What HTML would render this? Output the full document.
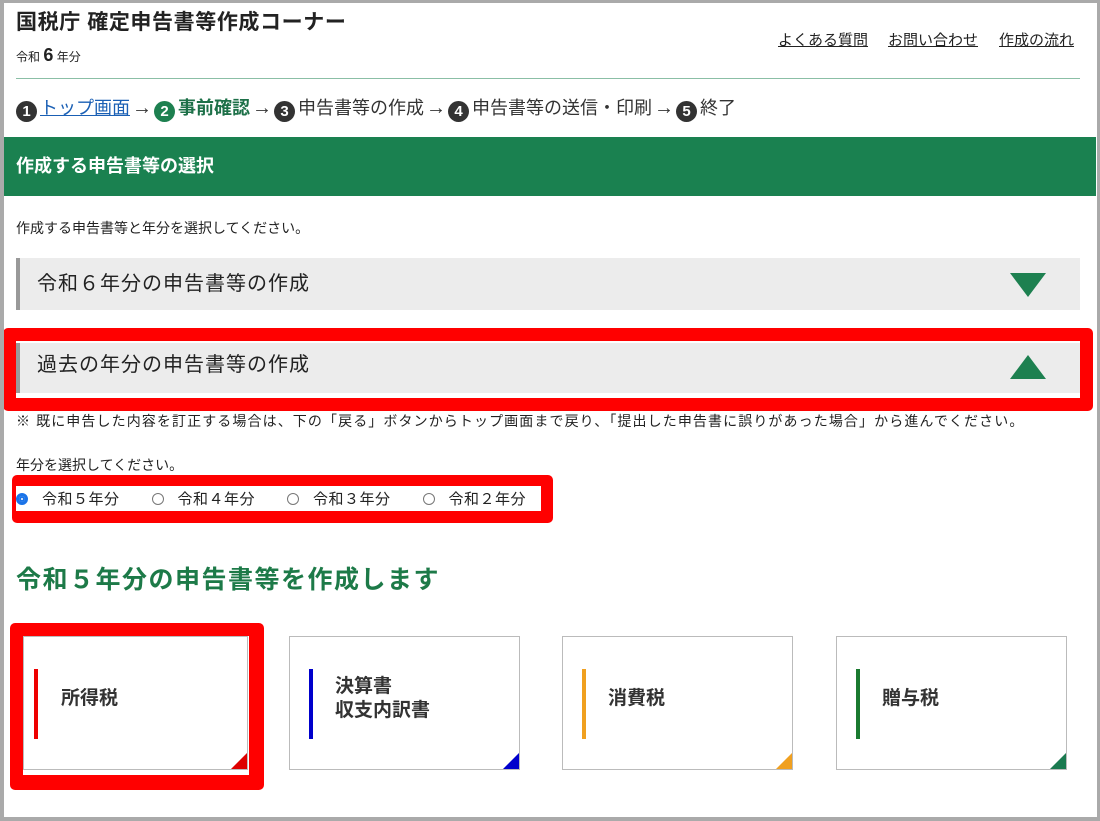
<!DOCTYPE html>
<html><head><meta charset="utf-8"><style>
*{margin:0;padding:0;box-sizing:border-box}
body{width:1100px;height:821px;overflow:hidden;background:#fff;font-family:"Liberation Sans","Noto Sans CJK JP",sans-serif;color:#222;position:relative}
.frame{position:absolute;left:0;top:0;width:1100px;height:821px;border:3px solid #aaa;border-left-width:4px;border-bottom-width:4px}
.a{position:absolute;white-space:nowrap}
.num{display:inline-block;width:21px;height:21px;border-radius:50%;background:#333;color:#fff;font-size:15px;font-weight:bold;text-align:center;line-height:21px;vertical-align:-2px;margin-right:3px}
.acc{position:absolute;left:16px;width:1064px;background:#ececec;border-left:4px solid #999;font-size:20px;padding-left:17px;letter-spacing:1px}
.red{position:absolute;border:13px solid #f00;border-radius:5px}
.card{position:absolute;top:636px;width:231px;height:134px;border:1px solid #bbb;background:#fff}
.card .bar{position:absolute;left:19px;top:32px;width:4px;height:70px}
.card .t{position:absolute;left:45px;font-size:19px;font-weight:bold;line-height:24px;color:#333}
.card .c{position:absolute;right:0;bottom:0;width:0;height:0;border-left:16px solid transparent;border-bottom:16px solid}
.rad{display:inline-block;width:12px;height:12px;border-radius:50%;border:1px solid #777;vertical-align:-1px;margin-right:14px}
.arr{font-size:20px;font-weight:bold;margin:0 2px}
</style></head><body>
<div class="a" style="left:16px;top:6px;font-size:21px;font-weight:bold;letter-spacing:0.6px">国税庁 確定申告書等作成コーナー</div>
<div class="a" style="left:16px;top:45px;font-size:12px">令和 <b style="font-size:18px">6</b> 年分</div>
<div class="a" style="left:778px;top:29px;font-size:15px;text-decoration:underline">よくある質問</div>
<div class="a" style="left:888px;top:29px;font-size:15px;text-decoration:underline">お問い合わせ</div>
<div class="a" style="left:999px;top:29px;font-size:15px;text-decoration:underline">作成の流れ</div>
<div class="a" style="left:16px;top:78px;width:1064px;height:1px;background:#8bbfa6"></div>
<div class="a" style="left:16px;top:94px;font-size:18px;color:#333"><span class="num">1</span><span style="color:#1a5fb4;text-decoration:underline">トップ画面</span><span class="arr">→</span><span class="num" style="background:#1d8050">2</span><b style="color:#1d7048">事前確認</b><span class="arr">→</span><span class="num">3</span>申告書等の作成<span class="arr">→</span><span class="num">4</span>申告書等の送信・印刷<span class="arr">→</span><span class="num">5</span>終了</div>
<div class="a" style="left:4px;top:137px;width:1092px;height:59px;background:#1a8150;color:#fff;font-size:18px;font-weight:bold;padding:15px 12px">作成する申告書等の選択</div>
<div class="a" style="left:16px;top:218px;font-size:14px">作成する申告書等と年分を選択してください。</div>
<div class="acc" style="top:258px;height:52px;line-height:52px">令和６年分の申告書等の作成<div style="position:absolute;right:34px;top:15px;border-left:18px solid transparent;border-right:18px solid transparent;border-top:24px solid #1d8050"></div></div>
<div class="acc" style="top:343px;height:50px;line-height:44px">過去の年分の申告書等の作成<div style="position:absolute;right:34px;top:12px;border-left:18px solid transparent;border-right:18px solid transparent;border-bottom:24px solid #1d8050"></div></div>
<div class="red" style="left:3px;top:328px;width:1090px;height:83px"></div>
<div class="a" style="left:16px;top:411px;font-size:14px;letter-spacing:1.1px">※ 既に申告した内容を訂正する場合は、下の「戻る」ボタンからトップ画面まで戻り、「提出した申告書に誤りがあった場合」から進んでください。</div>
<div class="a" style="left:16px;top:455px;font-size:14px">年分を選択してください。</div>
<div class="a" style="left:16px;top:488px;font-size:15px;letter-spacing:0.5px"><span class="rad" style="border:3px solid #1a73e8;background:#fff;box-shadow:inset 0 0 0 2px #1a73e8"></span>令和５年分<span style="margin-left:32px"></span><span class="rad"></span>令和４年分<span style="margin-left:32px"></span><span class="rad"></span>令和３年分<span style="margin-left:32px"></span><span class="rad"></span>令和２年分</div>
<div class="red" style="left:12px;top:475px;width:541px;height:48px;border-width:11px 12px 12px 4px"></div>
<div class="a" style="left:16px;top:560px;font-size:25px;font-weight:bold;color:#1d7a48;letter-spacing:1.5px">令和５年分の申告書等を作成します</div>
<div class="card" style="left:23px;width:225px"><div class="bar" style="left:10px;background:#e00"></div><div class="t" style="left:37px;top:50px">所得税</div><div class="c" style="border-bottom-color:#d00"></div></div>
<div class="red" style="left:10px;top:623px;width:254px;height:167px;border-width:13px 15px 15px 13px"></div>
<div class="card" style="left:289px"><div class="bar" style="background:#00c"></div><div class="t" style="top:38px">決算書<br>収支内訳書</div><div class="c" style="border-bottom-color:#00c"></div></div>
<div class="card" style="left:562px"><div class="bar" style="background:#f0a020"></div><div class="t" style="top:50px">消費税</div><div class="c" style="border-bottom-color:#f0a020"></div></div>
<div class="card" style="left:836px"><div class="bar" style="background:#1a7a30"></div><div class="t" style="top:50px">贈与税</div><div class="c" style="border-bottom-color:#1a7a50"></div></div>
<div class="frame"></div>
</body></html>
